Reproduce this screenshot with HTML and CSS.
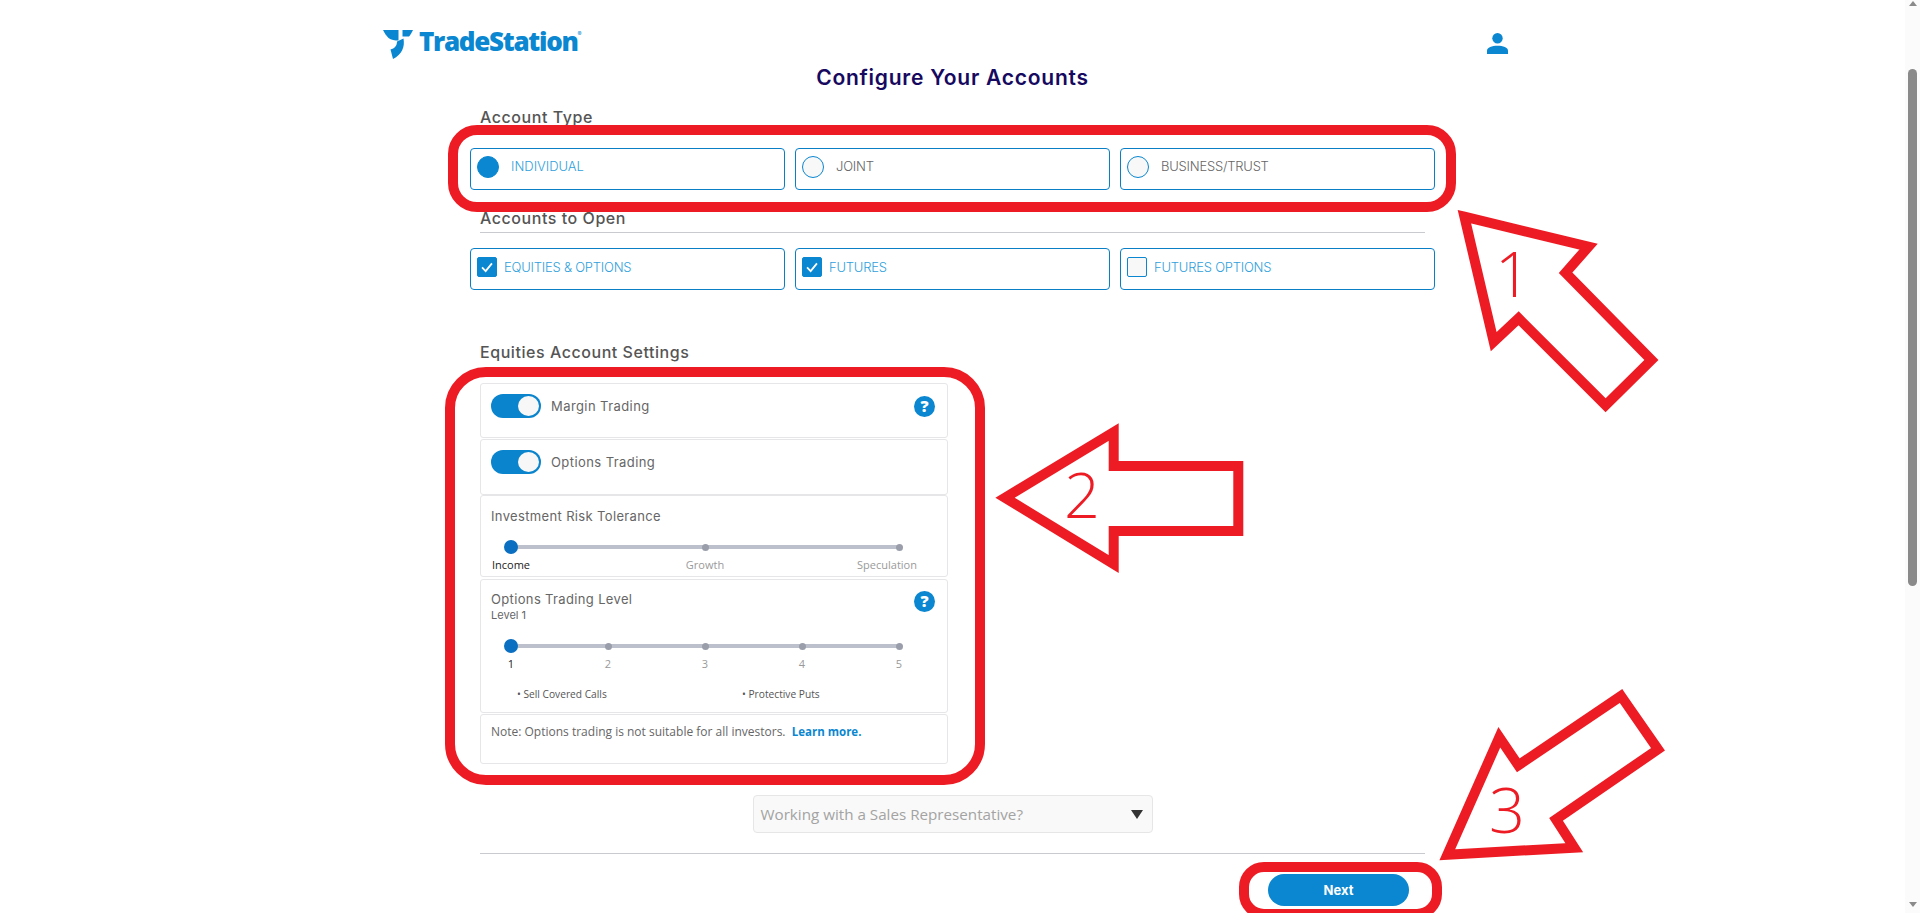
FILE: index.html
```html
<!DOCTYPE html>
<html lang="en">
<head>
<meta charset="utf-8">
<title>Configure Your Accounts</title>
<link rel="stylesheet" href="styles.css">
</head>
<body>
<div class="page">
  <header class="header">
    <div class="logo">
      <svg class="logo-mark" viewBox="0 0 30 30" aria-hidden="true">
        <path d="M0 1H15.500V11.500C12 11.500 8 11 5.500 9C3.500 7 1.500 4 0 1Z"/>
        <path d="M19.500 1H30C28.500 4 27.500 6 26 7.500H19.500Z"/>
        <path d="M14 12.500L20.500 9.500C22 18 19 25.500 10 30L7.500 20.500C11.500 19.500 14 17 14 12.500Z"/>
      </svg>
      <span class="logo-text">TradeStation</span><span class="logo-reg">®</span>
    </div>
    <svg class="person" viewBox="0 0 21 21" aria-hidden="true">
      <circle cx="10.500" cy="5.200" r="5.200"/>
      <path d="M0 21V17.500C0 14.500 5 12.800 10.500 12.800S21 14.500 21 17.500V21Z"/>
    </svg>
  </header>

  <main class="form">
    <h1 class="title">Configure Your Accounts</h1>

    <h2 class="section-label">Account Type</h2>
    <div class="choice-row">
      <div class="choice selected"><span class="radio on"></span><span class="choice-text radio-text">INDIVIDUAL</span></div>
      <div class="choice"><span class="radio"></span><span class="choice-text radio-text">JOINT</span></div>
      <div class="choice"><span class="radio"></span><span class="choice-text radio-text">BUSINESS/TRUST</span></div>
    </div>

    <h2 class="section-label ruled">Accounts to Open</h2>
    <div class="choice-row">
      <div class="choice selected"><span class="check on"><svg viewBox="0 0 20 20" aria-hidden="true"><path d="M4.500 10.500L8.500 14.500L15.500 6"/></svg></span><span class="choice-text">EQUITIES &amp; OPTIONS</span></div>
      <div class="choice selected"><span class="check on"><svg viewBox="0 0 20 20" aria-hidden="true"><path d="M4.500 10.500L8.500 14.500L15.500 6"/></svg></span><span class="choice-text">FUTURES</span></div>
      <div class="choice selected"><span class="check"></span><span class="choice-text">FUTURES OPTIONS</span></div>
    </div>

    <h2 class="section-label settings-label">Equities Account Settings</h2>
    <section class="settings">
      <div class="panel panel-margin">
        <div class="panel-line">
          <span class="toggle"><span class="knob"></span></span>
          <span class="toggle-text">Margin Trading</span>
          <span class="help">?</span>
        </div>
      </div>
      <div class="panel panel-options">
        <div class="panel-line">
          <span class="toggle"><span class="knob"></span></span>
          <span class="toggle-text">Options Trading</span>
        </div>
      </div>
      <div class="panel panel-risk">
        <div class="panel-title risk-title">Investment Risk Tolerance</div>
        <div class="scale">
          <div class="stop current"><span class="handle"></span><span class="stop-text">Income</span></div>
          <div class="stop"><span class="dot-slot"><span class="dot"></span></span><span class="stop-text">Growth</span></div>
          <div class="stop"><span class="dot-slot"><span class="dot"></span></span><span class="stop-text stop-end">Speculation</span></div>
        </div>
      </div>
      <div class="panel panel-level">
        <div class="level-head">
          <div>
            <div class="panel-title">Options Trading Level</div>
            <div class="panel-sub">Level 1</div>
          </div>
          <span class="help help-level">?</span>
        </div>
        <div class="scale level-scale">
          <div class="stop current"><span class="handle"></span><span class="stop-text">1</span></div>
          <div class="stop"><span class="dot-slot"><span class="dot"></span></span><span class="stop-text">2</span></div>
          <div class="stop"><span class="dot-slot"><span class="dot"></span></span><span class="stop-text">3</span></div>
          <div class="stop"><span class="dot-slot"><span class="dot"></span></span><span class="stop-text">4</span></div>
          <div class="stop"><span class="dot-slot"><span class="dot"></span></span><span class="stop-text">5</span></div>
        </div>
        <div class="bullets">
          <span>• Sell Covered Calls</span>
          <span>• Protective Puts</span>
        </div>
      </div>
      <div class="panel panel-note">
        <p class="note">Note: Options trading is not suitable for all investors.&nbsp; <a class="learn" href="#">Learn more.</a></p>
      </div>
    </section>

    <div class="rep-wrap">
      <div class="rep-select"><span>Working with a Sales Representative?</span><span class="rep-arrow"></span></div>
    </div>
    <div class="actions">
      <button class="next" type="button">Next</button>
    </div>
  </main>
</div>

<div class="scrollbar">
  <span class="sb-up"></span>
  <span class="sb-thumb"></span>
  <span class="sb-down"></span>
</div>

<svg class="marks" viewBox="0 0 1920 913" aria-hidden="true">
  <rect class="mark" x="453" y="130" width="998" height="77" rx="24"/>
  <rect class="mark" x="450" y="372" width="530" height="408" rx="36"/>
  <rect class="mark" x="1244" y="867" width="193" height="47" rx="20"/>
  <polygon class="mark" points="1464.400,216.700 1588.500,246.700 1565.600,272.700 1651.400,360 1605.600,405.300 1518.600,318.300 1493.700,341.700"/>
  <polygon class="mark" points="1005,497.700 1113.700,432 1113.700,466 1238.300,466 1238.300,531 1113.700,531 1113.700,564"/>
  <polygon class="mark" points="1621,696 1658,749.300 1556,819.300 1574.300,847.700 1447.300,854.700 1499.300,737.300 1518.300,765.300"/>
  <text class="mark-num" x="1513" y="297">1</text>
  <text class="mark-num" x="1082" y="518">2</text>
  <text class="mark-num" x="1507" y="833">3</text>
</svg>
</body>
</html>
```

FILE: styles.css
```css
* { box-sizing: border-box; }
html, body { margin: 0; padding: 0; height: 913px; overflow: hidden; background: #fff; }
body { font-family: "Inter", "Liberation Sans", sans-serif; color: #555; }

.page { width: 1905px; height: 913px; overflow: hidden; }

.header {
  width: 1140px; margin-left: 383px; height: 65px; padding: 29px 15px 0 0;
  display: flex; justify-content: space-between; align-items: flex-start;
}
.logo { display: flex; align-items: flex-start; height: 30px; }
.logo-mark { width: 30px; height: 30px; fill: #0a87d0; flex: none; }
.logo-text {
  margin-left: 6px; font-family: "Open Sans", sans-serif; font-weight: 800; font-size: 26px;
  line-height: 24px; letter-spacing: -1.3px; color: #0a87d0; white-space: nowrap;
}
.logo-reg { font-size: 6px; line-height: 8px; margin-top: 1px; color: #0a87d0; }
.person { width: 21px; height: 21px; fill: #0a87d0; margin-top: 4px; }

.form { width: 945px; margin-left: 480px; }
.title {
  margin: 0 0 16px; height: 26px; line-height: 26px; text-align: center;
  font-size: 21px; font-weight: 600; letter-spacing: 0.75px; color: #16095f;
}
.section-label {
  margin: 0 0 21px; height: 20px; line-height: 20px;
  font-size: 16px; font-weight: 500; letter-spacing: 0.55px; color: #555;
}
.ruled { margin: 18px 0 15px; height: 25px; border-bottom: 1px solid #c9c9d0; }
.settings-label { margin: 52px 0 21px; }

.choice-row { display: grid; grid-template-columns: repeat(3, 315px); gap: 10px; margin: 0 -10px; }
.choice {
  height: 42px; border: 1px solid #0a7fc6; border-radius: 4px; padding: 7px 6px;
  display: flex; align-items: flex-start; background: #fff;
}
.radio {
  width: 22px; height: 22px; border-radius: 50%; border: 1px solid #0a87d0; background: #f8f8f8; flex: none;
}
.radio.on { background: #0a87d0; }
.check {
  width: 20px; height: 20px; margin-top: 1px; border-radius: 2px; border: 1px solid #0a87d0; background: #f8f8f8; flex: none;
}
.check.on { background: #0a87d0; }
.check svg { display: block; width: 18px; height: 18px; fill: none; stroke: #fff; stroke-width: 2; }
.choice-text {
  margin-left: 7px; line-height: 22px; font-size: 13px; font-weight: 300; letter-spacing: -0.22px;
  color: #2f9fdc; white-space: nowrap;
}
.radio-text { margin-left: 12px; line-height: 20px; color: #666; }
.selected .radio-text { letter-spacing: 0; }
.selected .choice-text { color: #2f9fdc; }

.settings { width: 468px; }
.panel { border: 1px solid #e6e6e8; border-radius: 3px; padding: 10px; background: #fff; }
.panel-margin { height: 55px; margin-bottom: 1px; }
.panel-options { height: 56px; }
.panel-risk { height: 82px; margin-bottom: 2px; }
.panel-level { height: 134px; margin-bottom: 1px; }
.panel-note { height: 50px; padding-top: 9px; }

.panel-line { display: flex; align-items: center; height: 24px; }
.toggle {
  width: 50px; height: 24px; border-radius: 12px; background: #0a84cc; padding: 2px 2px 2px 27px; flex: none;
}
.knob { display: block; width: 21px; height: 20px; border-radius: 50%; background: #f7f7f7; }
.toggle-text { margin-left: 10px; font-size: 13px; font-weight: 400; letter-spacing: 0.42px; color: #666; flex: 1; }
.help {
  width: 21px; height: 21px; margin-right: 2px; border-radius: 50%; background: #0a87d0; color: #fff; flex: none;
  font-family: "Open Sans", sans-serif; font-size: 16px; font-weight: 800; line-height: 21px; text-align: center;
}
.help-level { margin-top: 1px; }
.panel-title { font-size: 13px; line-height: 18px; letter-spacing: 0.35px; color: #666; }
.risk-title { line-height: 20px; margin-bottom: 14px; }
.panel-sub { font-size: 11px; line-height: 14px; color: #666; }
.level-head { display: flex; justify-content: space-between; align-items: flex-start; height: 32px; }

.scale {
  width: 388px; margin-left: 20px; display: flex; justify-content: space-between;
  background: linear-gradient(#bcc0cc, #bcc0cc) no-repeat 0 5px / 100% 4px;
}
.level-scale { margin-top: 17px; }
.stop { width: 0; display: flex; flex-direction: column; align-items: center; }
.dot-slot { width: 14px; height: 14px; display: flex; align-items: center; justify-content: center; flex: none; }
.dot { width: 7px; height: 7px; border-radius: 50%; background: #9a9eab; }
.handle { width: 14px; height: 14px; border-radius: 50%; background: #0a6fc0; flex: none; }
.stop-text {
  margin-top: 4px; font-family: "Open Sans", sans-serif; font-size: 11px; line-height: 14px; color: #9a9a9a; white-space: nowrap;
}
.current .stop-text { color: #222; }
.stop-end { margin-right: 24px; }
.bullets {
  margin-top: 16px; padding-left: 26px; display: grid; grid-template-columns: 225px auto;
  font-family: "Open Sans", sans-serif; font-size: 10.200px; line-height: 14px; color: #555;
}
.note { margin: 0; font-family: "Open Sans", sans-serif; font-size: 12px; line-height: 16px; color: #666; white-space: nowrap; }
.learn { color: #0a87d0; font-weight: 700; font-size: 11.500px; text-decoration: none; }

.rep-wrap { margin-top: 31px; display: flex; justify-content: center; }
.rep-select {
  width: 400px; height: 38px; padding: 0 9px 0 7px; border: 1px solid #e6e6e6; border-radius: 4px; background: #f9f9f9;
  display: flex; justify-content: space-between; align-items: center;
  font-family: "Open Sans", sans-serif; font-size: 15.200px; color: #a3a3a3;
}
.rep-arrow { width: 0; height: 0; border-left: 6px solid transparent; border-right: 6px solid transparent; border-top: 9px solid #333; }
.actions { margin-top: 20px; padding-top: 20px; border-top: 1px solid #c9c9d0; display: flex; justify-content: flex-end; padding-right: 16px; }
.next {
  width: 141px; height: 32px; border: 0; border-radius: 16px; background: #0a87d0; color: #fff;
  font-family: "Inter", sans-serif; font-size: 13px; font-weight: 700;
}

.scrollbar {
  position: absolute; top: 0; right: 0; width: 15px; height: 913px; background: #fbfbfb;
  display: flex; flex-direction: column; align-items: center;
}
.sb-up { margin-top: 1px; width: 0; height: 0; border-left: 4.500px solid transparent; border-right: 4.500px solid transparent; border-bottom: 5px solid #8a8a8a; }
.sb-thumb { margin-top: 63px; width: 9px; height: 517px; border-radius: 5px; background: #8a8a8a; }
.sb-down { margin-top: 316px; width: 0; height: 0; border-left: 4.500px solid transparent; border-right: 4.500px solid transparent; border-top: 5px solid #8a8a8a; }

.marks { position: absolute; top: 0; left: 0; width: 1920px; height: 913px; pointer-events: none; overflow: hidden; }
.mark { fill: none; stroke: #ed1c24; stroke-width: 10; stroke-linejoin: miter; stroke-miterlimit: 10; }
.mark-num { fill: #ed1c24; font-family: "Open Sans", sans-serif; font-weight: 300; font-size: 63px; text-anchor: middle; }
```
